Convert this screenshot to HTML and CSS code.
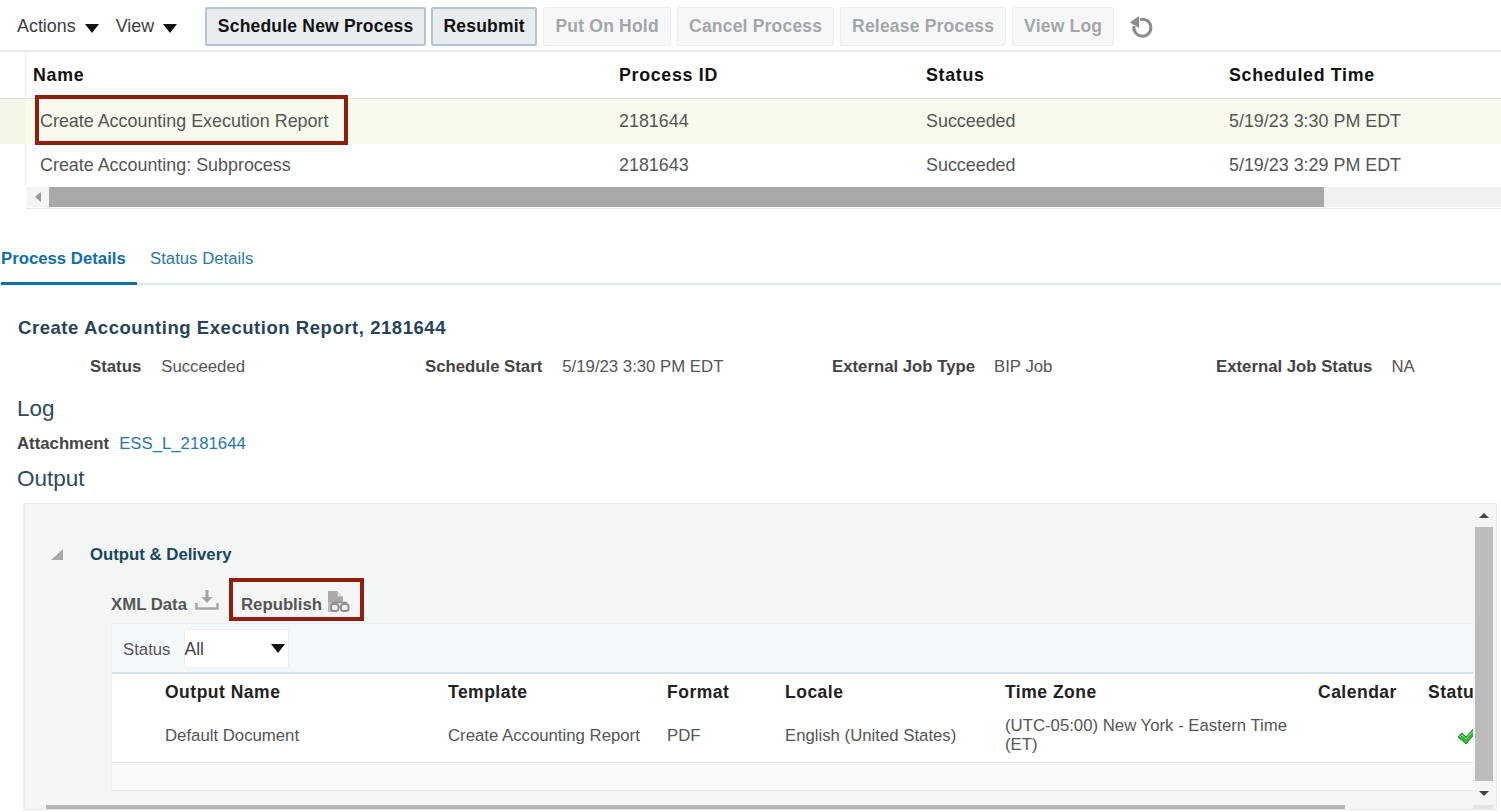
FILE: index.html
```html
<!DOCTYPE html>
<html lang="en">
<head>
<meta charset="utf-8">
<title>Scheduled Processes</title>
<link rel="stylesheet" href="styles.css">
</head>
<body>
<header class="toolbar">
  <span class="menu">Actions <i class="caret"></i></span>
  <span class="menu menu-view">View <i class="caret"></i></span>
  <button class="btn btn-on btn-schedule">Schedule New Process</button>
  <button class="btn btn-on btn-resubmit">Resubmit</button>
  <button class="btn btn-hold">Put On Hold</button>
  <button class="btn btn-cancel">Cancel Process</button>
  <button class="btn btn-release">Release Process</button>
  <button class="btn btn-log">View Log</button>
  <svg class="refresh" width="26" height="24" viewBox="0 0 26 24"><path d="M11 5.500 A8.500 8.500 0 1 1 5 12" fill="none" stroke="#8b8b8b" stroke-width="3"/><path d="M1 8.500 L10 2 V14 Z" fill="#8b8b8b"/></svg>
</header>
<section class="grid">
  <div class="row row-head"><span>Name</span><span>Process ID</span><span>Status</span><span>Scheduled Time</span></div>
  <div class="row row-sel"><span class="cell-name">Create Accounting Execution Report</span><span>2181644</span><span>Succeeded</span><span>5/19/23 3:30 PM EDT</span><b class="mark mark-row"></b></div>
  <div class="row row-plain"><span class="cell-name">Create Accounting: Subprocess</span><span>2181643</span><span>Succeeded</span><span>5/19/23 3:29 PM EDT</span></div>
  <div class="hscroll"><span class="hs-btn"><i class="tri-left"></i></span><span class="hs-thumb"></span></div>
</section>
<nav class="tabs"><a class="tab tab-on">Process Details</a><a class="tab">Status Details</a></nav>
<h2 class="title">Create Accounting Execution Report, 2181644</h2>
<div class="facts">
  <span class="fact f1"><b>Status</b>Succeeded</span>
  <span class="fact f2"><b>Schedule Start</b>5/19/23 3:30 PM EDT</span>
  <span class="fact f3"><b>External Job Type</b>BIP Job</span>
  <span class="fact f4"><b>External Job Status</b>NA</span>
</div>
<h3 class="sub sub-log">Log</h3>
<div class="attach"><b>Attachment</b><a>ESS_L_2181644</a></div>
<h3 class="sub sub-out">Output</h3>
<section class="panel">
  <div class="panel-body">
    <div class="disclose"><i class="tri-open"></i><span>Output &amp; Delivery</span></div>
    <div class="actions">
      <span class="act">XML Data</span>
      <svg class="ic-dl" width="24" height="22" viewBox="0 0 24 22"><path d="M12 1v10" stroke="#a5a5a5" stroke-width="3"/><path d="M6.500 8h11L12 14z" fill="#a5a5a5"/><path d="M1.500 14v5.500h21V14" fill="none" stroke="#a5a5a5" stroke-width="2.500"/></svg>
      <span class="act act-rep">Republish</span>
      <svg class="ic-rep" width="23" height="22" viewBox="0 0 23 22"><path d="M1 0h9l6 6v5H1z" fill="#a8a8a8"/><path d="M1 11h5v10H1z" fill="#bdbdbd"/><path d="M10.500 0l5.500 5.500h-5.500z" fill="#dcdcdc"/><rect x="4" y="13" width="7.500" height="7" rx="2.500" fill="#eeeeee" stroke="#8f8f8f" stroke-width="2"/><rect x="14" y="13" width="7.500" height="7" rx="2.500" fill="#eeeeee" stroke="#8f8f8f" stroke-width="2"/><path d="M5 11.500h15M11 16h3" stroke="#8f8f8f" stroke-width="1.500"/></svg>
      <b class="mark mark-rep"></b>
    </div>
    <div class="inner">
      <div class="filter"><span class="filter-label">Status</span><span class="select">All<i class="caret"></i></span></div>
      <div class="otable">
        <div class="orow orow-head"><span>Output Name</span><span>Template</span><span>Format</span><span>Locale</span><span>Time Zone</span><span>Calendar</span><span>Status</span></div>
        <div class="orow orow-data"><span>Default Document</span><span>Create Accounting Report</span><span>PDF</span><span>English (United States)</span><span class="tz">(UTC-05:00) New York - Eastern Time (ET)</span><span></span><span class="ok"><svg width="22" height="20" viewBox="0 0 22 20"><path d="M1 11l4-4 4 4L18 1l3 3L9 18z" fill="#35b53a" stroke="#1f8f2a"/><path d="M3 11l2-2 4 4L18 3" fill="none" stroke="#7fdc7f" stroke-width="1"/></svg></span></div>
      </div>
      <div class="ofoot"></div>
    </div>
  </div>
  <div class="vscroll"><i class="tri-up"></i><span class="vs-thumb"></span><i class="tri-down"></i></div>
  <div class="pbottom"><span class="pb-thumb"></span><span class="pb-corner"></span></div>
</section>
</body>
</html>
```
FILE: styles.css
```css
* { box-sizing: border-box; }
html, body { margin: 0; padding: 0; }
body { width: 1501px; height: 812px; overflow: hidden; background: #fff; font-family: "Liberation Sans", Arial, sans-serif; font-size: 16.750px; color: #555; position: relative; }
.toolbar { height: 52px; display: flex; align-items: center; padding: 3px 0 0 17px; border-bottom: 2px solid #e8eaec; }
.menu { color: #3d3d3d; font-size: 17.900px; display: inline-flex; align-items: center; }
.menu-view { margin-left: 17px; }
.caret { display: inline-block; width: 0; height: 0; margin-left: 9px; margin-top: 3px; border-left: 7px solid transparent; border-right: 7px solid transparent; border-top: 9px solid #111; }
.btn { height: 39px; margin: 0 6px 0 0; padding: 0; font: bold 17.500px "Liberation Sans", Arial, sans-serif; letter-spacing: .2px; color: #a3a6a8; background: #f6f7f8; border: 1px solid #eceef0; border-radius: 2px; }
.btn-on { color: #111; background: #e9edf0; border: 2px solid #b4c3cf; }
.btn-schedule { width: 221px; margin-left: 28px; margin-right: 5px; flex: none; }
.btn-resubmit { width: 106px; margin-right: 6px; }
.btn-hold { width: 128px; }
.btn-cancel { width: 157px; }
.btn-release { width: 166px; }
.btn-log { width: 102px; margin-right: 15px; }
.refresh { margin-top: -2px; }
.grid { position: relative; }
.row { display: grid; grid-template-columns: 619px 307px 303px 1fr; align-items: center; font-size: 17.900px; color: #555; position: relative; }
.row span:first-child { padding-left: 40px; }
.row-head { height: 47px; font-size: 17.800px; font-weight: bold; color: #111; letter-spacing: .7px; border-bottom: 1px solid #dfe2e4; }
.row-head span:first-child { padding-left: 33px; }
.row-head::before, .row-plain::before { content: ""; position: absolute; left: 25px; top: 0; bottom: 0; width: 1px; background: #eaecee; }
.row-sel { height: 45px; background: linear-gradient(to right, #f6f6e6 25px, #f9faee 25px); }
.row-plain { height: 42px; }
.mark { position: absolute; border: 4px solid #8e1f0b; pointer-events: none; }
.mark-row { left: 35px; top: -4px; width: 313px; height: 50px; }
.hscroll { margin: 1px 0 0 26px; height: 20px; background: #f1f1f1; display: flex; box-shadow: 0 1px 0 #fff, 0 2px 0 #e4e6e8; }
.hs-btn { width: 23px; background: #f4f4f4; display: flex; align-items: center; justify-content: center; }
.tri-left { border-top: 5px solid transparent; border-bottom: 5px solid transparent; border-right: 6px solid #999; }
.hs-thumb { width: 1275px; background: #a8a8a8; }
.tabs { display: flex; margin-top: 28px; height: 50px; border-bottom: 2px solid #e4e9ed; padding-left: 1px; white-space: nowrap; }
.tab { color: #2a77a8; padding: 14px 12px 0 0; height: 50px; }
.tab-on { width: 136px; font-weight: bold; color: #0f6ea6; border-bottom: 3px solid #0f72b0; margin-right: 13px; }
.title { margin: 32px 0 0 18px; font-size: 18.500px; line-height: 22px; color: #26445a; letter-spacing: .55px; }
.facts { height: 22px; margin-top: 17px; display: flex; }
.fact { display: flex; white-space: nowrap; line-height: 22px; }
.fact b { color: #444; margin-right: 20px; }
.f1 { margin-left: 90px; width: 335px; }
.f2 { width: 407px; }
.f3 { width: 384px; }
.f3 b, .f4 b { margin-right: 19px; }
.sub { margin: 0 0 0 17px; font-weight: normal; font-size: 22.500px; line-height: 26px; color: #2e4a5c; }
.sub-log { margin-top: 18px; }
.attach { margin: 11px 0 0 17px; line-height: 22px; }
.attach b { color: #444; margin-right: 10px; }
.attach a { color: #2a77a8; }
.sub-out { margin-top: 11px; }
.panel { position: relative; margin: 11px 4px 0 24px; height: 307px; background: #f4f5f5; border: 1px solid #e6e8e9; box-shadow: -1px 0 0 #eee; }
.panel-body { padding: 0 0 0 26px; }
.disclose { display: flex; align-items: center; height: 20px; margin-top: 41px; font-weight: bold; color: #17475f; }
.disclose span { margin-left: 27px; }
.tri-open { width: 0; height: 0; border-left: 12px solid transparent; border-bottom: 11px solid #a8a8a8; margin-top: -1px; }
.actions { position: relative; display: flex; align-items: center; height: 42px; margin: 13px 0 0 60px; }
.act { font-weight: bold; color: #555; padding-top: 11px; }
.ic-dl { margin: 1px 0 0 8px; }
.act-rep { margin-left: 22px; }
.ic-rep { margin: 6px 0 0 5px; }
.mark-rep { left: 118px; top: 0; width: 135px; height: 43px; }
.inner { margin: 3px 0 0 60px; width: 1362px; overflow: hidden; border-left: 1px solid #eef1f3; }
.filter { height: 51px; background: #f5f8fa; display: flex; align-items: center; padding-left: 11px; border-top: 1px solid #eaeef1; border-bottom: 2px solid #d2dee7; }
.filter-label { padding-top: 3px; }
.select { width: 105px; height: 39px; margin-left: 13px; background: #fff; border: 1px solid #eef0f2; display: flex; align-items: center; padding-top: 2px; font-size: 17.500px; position: relative; color: #444; }
.select .caret { position: absolute; right: 3px; top: 14px; margin: 0; }
.otable { background: #fff; }
.orow { display: grid; grid-template-columns: 283px 219px 118px 220px 313px 110px 80px; padding-left: 53px; }
.orow-head { height: 37px; align-items: center; font-size: 17.500px; font-weight: bold; color: #222; letter-spacing: .5px; }
.orow-data { height: 52px; align-items: center; border-bottom: 1px solid #e3e8ec; line-height: 19px; padding-bottom: 3px; }
.tz { padding-right: 20px; }
.ok { padding-left: 29px; padding-top: 6px; }
.ofoot { height: 28px; background: #f7f9fa; border-bottom: 1px solid #e3e8ec; }
.vscroll { position: absolute; right: 3px; top: 0; bottom: 12px; width: 18px; display: flex; flex-direction: column; align-items: center; }
.vs-thumb { width: 18px; height: 254px; background: #bbb; margin: 9px 0 10px; }
.tri-up { margin-top: 9px; border-left: 5px solid transparent; border-right: 5px solid transparent; border-bottom: 5px solid #444; }
.tri-down { border-left: 5px solid transparent; border-right: 5px solid transparent; border-top: 5px solid #444; }
.pbottom { position: absolute; left: 21px; right: 3px; bottom: 0; height: 4px; display: flex; justify-content: space-between; }
.pb-thumb { width: 1299px; background: #b5b5b5; }
.pb-corner { width: 20px; background: #e4e4e4; }
```
